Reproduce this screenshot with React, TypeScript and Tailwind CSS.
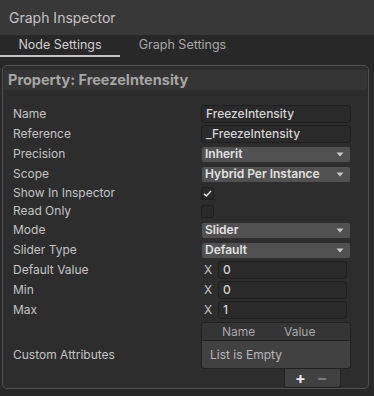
import React from "react";

const Label = ({ children }: { children: React.ReactNode }) => (
  <div className="w-[188px] text-[12px] text-[#c4c4c4] leading-none">{children}</div>
);

const TextField = ({ value }: { value: string }) => (
  <div className="w-[150px] h-[18px] rounded-[3px] border border-[#1f1f1f] bg-[#2a2a2a] px-[4px] flex items-center text-[12px] font-medium text-[#d4d4d4]">
    {value}
  </div>
);

const Dropdown = ({ value }: { value: string }) => (
  <div className="w-[150px] h-[17px] rounded-[3px] border border-[#2e2e2e] bg-[#515151] pl-[3px] pr-[6px] flex items-center justify-between text-[12px] font-semibold text-[#e2e2e2]">
    <span>{value}</span>
    <svg width="8" height="5" viewBox="0 0 8 5">
      <path d="M0.5 0.5 L7.5 0.5 L4 4.5 Z" fill="#c8c8c8" />
    </svg>
  </div>
);

const Check = ({ checked }: { checked?: boolean }) => (
  <div className="w-[13px] h-[13px] rounded-[2px] border border-[#1f1f1f] bg-[#2a2a2a] flex items-center justify-center">
    {checked && (
      <svg width="11" height="11" viewBox="0 0 11 11">
        <path d="M2 5.8 L4.3 8 L9 3" stroke="#e8e8e8" strokeWidth="1.5" fill="none" />
      </svg>
    )}
  </div>
);

const Vec = ({ value }: { value: string }) => (
  <div className="flex items-center">
    <span className="w-[17px] pl-[3px] text-[12px] text-[#c4c4c4]">X</span>
    <div className="w-[129px] h-[18px] rounded-[3px] border border-[#1f1f1f] bg-[#2a2a2a] px-[4px] flex items-center text-[12px] font-medium text-[#d4d4d4]">
      {value}
    </div>
  </div>
);

const Row = ({ h, label, children }: { h: string; label: string; children: React.ReactNode }) => (
  <div className={`flex items-center ${h}`}>
    <Label>{label}</Label>
    {children}
  </div>
);

export default function App() {
  return (
    <div
      className="w-[374px] h-[396px] bg-[#282828] overflow-hidden flex flex-col"
      style={{ fontFamily: "Inter, 'Noto Sans', sans-serif" }}
    >
      <div className="h-[35px] shrink-0 bg-[#383838] px-[9px] flex items-center text-[14px] text-[#c4c4c4]">
        Graph Inspector
      </div>
      <div className="h-[22px] shrink-0 flex text-[12.5px]">
        <div className="w-[120px] flex items-center justify-center border-b-2 border-[#c4c4c4] text-[#cfcfcf]">
          Node Settings
        </div>
        <div className="w-[125px] flex items-center justify-center text-[#a8a8a8] pb-[2px]">
          Graph Settings
        </div>
      </div>
      <div className="mt-[8px] ml-[2px] w-[367px] h-[324px] shrink-0 rounded-[5px] border border-[#505050] bg-[#2d2d2d] flex flex-col">
        <div className="mt-[4px] mx-[1px] h-[20px] rounded-[3px] bg-[#353535] px-[4px] flex items-center text-[14.5px] font-bold text-[#a6a6a6]">
          Property: FreezeIntensity
        </div>
        <div className="mt-[14px] pl-[10px] flex flex-col">
          <Row h="h-[20px]" label="Name"><TextField value="FreezeIntensity" /></Row>
          <Row h="h-[20px]" label="Reference"><TextField value="_FreezeIntensity" /></Row>
          <Row h="h-[20px]" label="Precision"><Dropdown value="Inherit" /></Row>
          <Row h="h-[20px]" label="Scope"><Dropdown value="Hybrid Per Instance" /></Row>
          <Row h="h-[18px]" label="Show In Inspector"><Check checked /></Row>
          <Row h="h-[18px]" label="Read Only"><Check /></Row>
          <Row h="h-[20px]" label="Mode"><Dropdown value="Slider" /></Row>
          <Row h="h-[20px]" label="Slider Type"><Dropdown value="Default" /></Row>
          <Row h="h-[20px]" label="Default Value"><Vec value="0" /></Row>
          <Row h="h-[20px]" label="Min"><Vec value="0" /></Row>
          <Row h="h-[20px]" label="Max"><Vec value="1" /></Row>
          <div className="mt-[2px] flex items-center">
            <Label>Custom Attributes</Label>
            <div className="w-[150px] flex flex-col">
              <div className="h-[19px] rounded-t-[3px] border border-[#222222] bg-[#353535] flex items-center text-[12px] text-[#a8a8a8]">
                <span className="ml-[20px] w-[62px]">Name</span>
                <span>Value</span>
              </div>
              <div className="h-[28px] rounded-b-[3px] border-x border-b border-[#222222] bg-[#414141] flex items-center pl-[8px] text-[12px] text-[#b8b8b8]">
                List is Empty
              </div>
              <div className="ml-[83px] w-[57px] h-[19px] rounded-b-[3px] border-x border-b border-[#222222] bg-[#414141] flex items-center">
                <span className="ml-[10px] text-[16px] font-bold text-[#e8e8e8] leading-none">+</span>
                <span className="ml-[11px] text-[16px] font-bold text-[#7c7c7c] leading-none">−</span>
              </div>
            </div>
          </div>
        </div>
      </div>
    </div>
  );
}
